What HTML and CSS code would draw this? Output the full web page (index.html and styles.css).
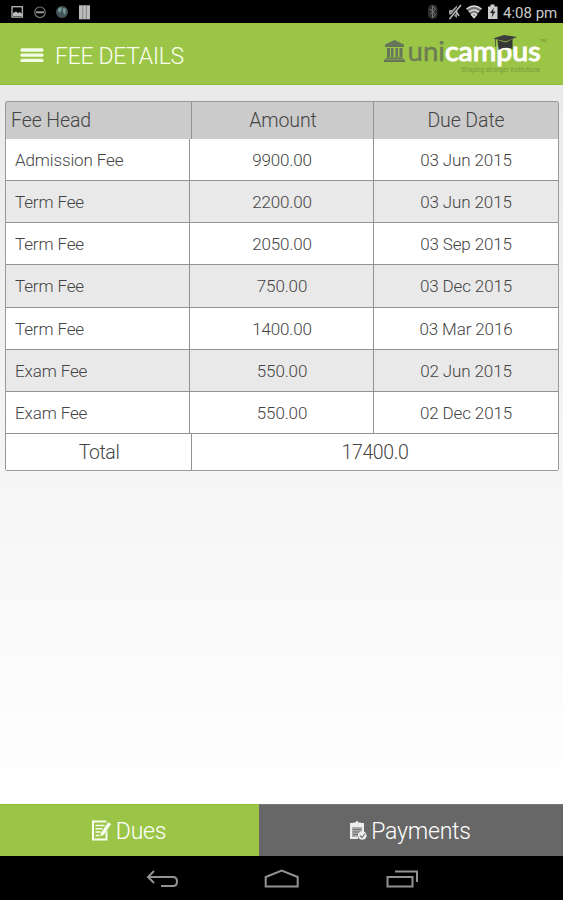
FILE: index.html
```html
<!DOCTYPE html>

<html lang="en">
    <head>
        <meta charset="utf-8" />
        <meta name="viewport" content="width=device-width, initial-scale=1.0">
        <title>Fee Details</title>
        <link rel="stylesheet" href="styles.css">
    </head>
    <body>
        <div class="wrap">
            <div class="status">
                <svg class="status-left" width="90" height="23" viewBox="0 0 90 23">
                    <rect x="12" y="6.7" width="10.4" height="10.4" fill="none" stroke="#aaa" stroke-width="1.4"/>
                    <path d="M13 16v-3l3-1.5 2 1.5 2-1 2 2v2z" fill="#bbb"/>
                    <circle cx="40" cy="12.3" r="5.3" fill="none" stroke="#777" stroke-width="1.2"/>
                    <path d="M36 12.3h8" stroke="#999" stroke-width="2"/>
                    <circle cx="62" cy="12" r="6" fill="#465357"/>
                    <path d="M58 9l3-2 1 3-3 3zM63 8l3 1-1 6-2-3z" fill="#749a9d"/>
                    <path d="M79 5.3h11v14H79z" fill="#bbb"/>
                    <path d="M82.7 5.3v14M86.4 5.3v14" stroke="#777" stroke-width=".8"/>
                </svg>
                <div class="status-right">
                    <svg width="76" height="23" viewBox="0 0 76 23">
                        <rect x="3" y="4.5" width="9.5" height="14.5" rx="4.5" fill="#2e2e2e"/>
                        <path d="M5 9l5.500 5.500-3 3V6l3 3L5 14.500" fill="none" stroke="#777" stroke-width="1"/>
                        <path d="M24 10h3l5-4.500v12.500l-5-3.500h-3z" fill="#999"/>
                        <path d="M36 5L24.500 19" stroke="#000" stroke-width="3"/>
                        <path d="M36 5L24.500 19M31 11l3 5" stroke="#bbb" stroke-width="1.5"/>
                        <path d="M41.500 9q7.500-6 15 0l-7.500 9z" fill="#777"/>
                        <path d="M41.500 9q7.500-6 15 0M44 12q5-4 10 0M46.500 14.500q2.500-2 5 0l-2.500 3z" fill="none" stroke="#ddd" stroke-width="1.5"/>
                        <path d="M63 6.500h2.500v-2h4v2h3v12.500h-9.500z" fill="#ccc"/>
                        <path d="M69 7.500l-4 5.500h2.500l-1 4.500 4-6h-2.500z" fill="#222"/>
                    </svg>
                    <span class="time">4:08 pm</span>
                </div>
            </div>
            <div class="header">
                <svg class="menu" width="24" height="16" viewBox="0 0 24 16">
                    <path d="M2 3h20M2 8.200h20M2 13.400h20" stroke="#f4fbe6" stroke-width="3.3" stroke-linecap="round"/>
                </svg>
                <h1>FEE DETAILS</h1>
                <svg class="logo" width="168" height="44" viewBox="380 33 168 44">
                    <g fill="#66745a">
                        <path d="M385 48v-2.500l9.500-4.500 9.500 4.500V48zM384 63v-2.500h21V63zM386 58.500h17v1.500h-17z"/>
                        <path d="M387 49h3v9h-3zM391 49h2.500v9H391zM395.500 49h2.500v9h-2.500zM399.500 49h3v9h-3z"/>
                    </g>
                    <text class="logo-uni" x="407.500" y="61.500" textLength="37.500" lengthAdjust="spacingAndGlyphs">uni</text>
                    <text class="logo-campus" x="445" y="61.500" textLength="95.500" lengthAdjust="spacingAndGlyphs">campus</text>
                    <path d="M493 39.500l11-3.500 13 2-11 4.500z" fill="#3c3c3c"/>
                    <path d="M497.500 41l8.500 2.500 6.500-3.500v10q-8-3-14 1z" fill="#343735"/>
                    <path d="M495.500 39.500v8" stroke="#55603f" stroke-width="1"/>
                    <text class="logo-tag" x="461" y="73" textLength="79" lengthAdjust="spacingAndGlyphs">Shaping stronger institutions</text>
                    <text class="logo-tm" x="540" y="43">TM</text>
                </svg>
            </div>
            <div class="content">
                <div class="fees">
                    <div class="li head"><span>Fee Head</span><span>Amount</span><span>Due Date</span></div>
                    <div class="li"><span>Admission Fee</span><span>9900.00</span><span>03 Jun 2015</span></div>
                    <div class="li odd"><span>Term Fee</span><span>2200.00</span><span>03 Jun 2015</span></div>
                    <div class="li"><span>Term Fee</span><span>2050.00</span><span>03 Sep 2015</span></div>
                    <div class="li odd"><span>Term Fee</span><span>750.00</span><span>03 Dec 2015</span></div>
                    <div class="li"><span>Term Fee</span><span>1400.00</span><span>03 Mar 2016</span></div>
                    <div class="li odd"><span>Exam Fee</span><span>550.00</span><span>02 Jun 2015</span></div>
                    <div class="li"><span>Exam Fee</span><span>550.00</span><span>02 Dec 2015</span></div>
                    <div class="li total"><span>Total</span><span>17400.0</span></div>
                </div>
            </div>
            <div class="tabs">
                <div class="tab on">
                    <svg width="21" height="21" viewBox="0 0 21 21">
                        <path d="M15.500 1.500H2v18h13.500V11" fill="none" stroke="#fafff0" stroke-width="2"/>
                        <path d="M4.500 5.500h9M4.500 8.800h7M4.500 12h5M4.500 15.500h4" stroke="#fafff0" stroke-width="1.5"/>
                        <path d="M17 2l3.500 2-7.500 11-4 2 .5-4z" fill="#fafff0" stroke="#9bc547" stroke-width=".6"/>
                    </svg>
                    <span>Dues</span>
                </div>
                <div class="tab">
                    <svg width="18" height="21" viewBox="0 0 18 21">
                        <path d="M1 3h14v10h-2V7H3v10h6v2H1z" fill="#eee"/>
                        <path d="M3 7h10v7l-4 3H3z" fill="#aaa"/>
                        <path d="M4 5h8V2.500H9.500L8 .5 6.500 2.500H4z" fill="#eee"/>
                        <path d="M4 9.500h8M4 12h7M4 14.500h5" stroke="#666" stroke-width=".8"/>
                        <circle cx="13.3" cy="15.5" r="4.3" fill="#eee"/>
                        <path d="M11 15.500l2 2 3-4" fill="none" stroke="#777" stroke-width="1.2"/>
                    </svg>
                    <span>Payments</span>
                </div>
            </div>
            <div class="nav">
                <svg width="563" height="44" viewBox="0 856 563 44" fill="none" stroke="#929292" stroke-width="2">
                    <path d="M154 871l-6 6 6 6M148.500 877H173q4 0 4 4.500t-4 4.500h-12"/>
                    <path d="M265.700 886.500v-9.500l16-6.500 16 6.500v9.500z"/>
                    <path d="M387.500 877h25v9.500h-25zM395 871.500h22V882"/>
                </svg>
            </div>
        </div>
    </body>
</html>
```
FILE: styles.css
```css
* { margin: 0; padding: 0; box-sizing: border-box;}
body { font: 300 17px/1.2 Roboto, sans-serif; color: #444;}
.wrap { display: flex; flex-direction: column; height: 900px;}
svg { display: block; flex: none;}

.status { display: flex; justify-content: space-between; height: 23px; background: #000;}
.status-right { display: flex; width: 138px; }
.time { width: 60px; margin-left: 2px; color: #ccc; font-size: 15px; font-weight: 400; line-height: 27px; white-space: nowrap;}

.header { display: flex; align-items: center; height: 62px; padding: 0 15px 0 20px; background: #9bc547; border-bottom: 1px solid #91bd35;}
.menu { margin-top: 2px;}
.header h1 { margin: 6px 0 0 11px; color: #fafff0; font-size: 23px; font-weight: 300; letter-spacing: -.3px; white-space: nowrap;}
.logo { margin-left: auto;}
.logo-uni { font: 400 27px Lato, sans-serif; fill: #6d7c55; stroke: #6d7c55; stroke-width: .4px;}
.logo-campus { font: 400 27px Lato, sans-serif; fill: #fff; stroke: #fff; stroke-width: 1.1px;}
.logo-tag { font: 7px 'Liberation Sans', sans-serif; fill: #789b3c;}
.logo-tm { font: 4px 'Liberation Sans', sans-serif; fill: #66813a;}

.content { flex: 1; padding: 16px 4px 0 5px; background: linear-gradient(#eaeaea, #fff);}
.fees { border: 1px solid #999; border-radius: 2px;}
.li { display: grid; grid-template: 100% / 184px 184px 1fr; height: 42.14px; background: #fff; border-bottom: 1px solid #929292; line-height: 43px; letter-spacing: -.13px; text-align: center;}
.li span + span { border-left: 1px solid #929292; margin-left: -1px;}
.li span:first-child { padding-left: 9px; text-align: left;}
.li.odd { background: #e9e9e9;}
.li.head { grid-template-columns: 186px 182px 1fr; height: 37px; background: #cbcbcb; border-bottom: 0; font-size: 19.5px; line-height: 37px; letter-spacing: -.1px;}
.li.head span:first-child { padding-left: 5px;}
.li.total { grid-template-columns: 186px 1fr; height: 36px; border-bottom: 0; font-size: 19.5px; line-height: 37px; letter-spacing: -.4px;}
.li.total span:first-child { padding-left: 0; text-align: center;}

.tabs { display: flex; height: 52px;}
.tab { display: flex; flex: 1; align-items: center; justify-content: center; padding-right: 2px; background: #676767; border-top: 1px solid #777; color: #fff; font-size: 23px; letter-spacing: -.2px;}
.tab.on { flex: none; width: 259px; background: #9bc547; border-color: #91bd35;}
.tab span { margin: 2px 0 0 4px;}
.nav { height: 44px; background: #000;}
```
